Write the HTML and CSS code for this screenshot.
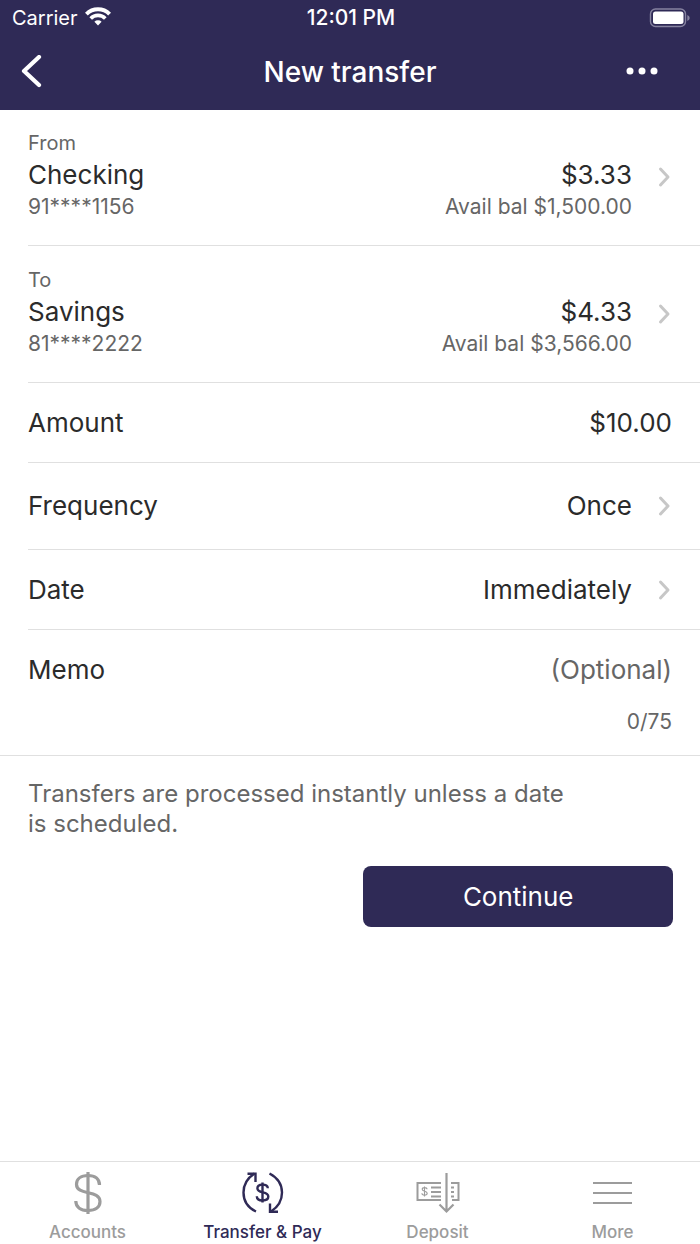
FILE: index.html
```html
<!DOCTYPE html>
<html lang="en">
<head>
<meta charset="utf-8">
<meta name="viewport" content="width=device-width, initial-scale=1">
<title>New transfer</title>
<link rel="stylesheet" href="styles.css">
</head>
<body>
<div class="app">
  <header class="header">
    <div class="status">
      <div class="carrier">
        <span>Carrier</span>
        <svg width="26" height="20" viewBox="0 0 26 20" fill="none" stroke="#fff" stroke-width="4" aria-hidden="true">
          <path d="M1.4 8.1a16.4 16.4 0 0 1 23.2 0"/>
          <path d="M5.7 12.5a10.3 10.3 0 0 1 14.6 0" stroke-width="3.7"/>
          <path d="M13 19.4l-3.6-3.7a5.2 5.2 0 0 1 7.2 0z" fill="#fff" stroke="none"/>
        </svg>
      </div>
      <time class="clock">12:01 PM</time>
      <svg class="battery" width="41" height="20" viewBox="0 0 41 20" aria-hidden="true">
        <rect x="1.500" y="1" width="35" height="17.500" rx="5" fill="none" stroke="#8683a0" stroke-width="1.400"/>
        <rect x="4" y="3.500" width="30.500" height="12.500" rx="2.500" fill="#fff"/>
        <path d="M38.300 7v6q2.400-1 2.400-3t-2.400-3z" fill="#8683a0"/>
      </svg>
    </div>
    <div class="nav">
      <button class="icon-button" type="button" aria-label="Back">
        <svg width="22" height="34" viewBox="0 0 22 34" fill="none" stroke="#fff" stroke-width="4.200" stroke-linecap="round" stroke-linejoin="round"><path d="M19 2L4 16l15 14"/></svg>
      </button>
      <h1 class="title">New transfer</h1>
      <button class="icon-button icon-button-end" type="button" aria-label="More options">
        <svg width="32" height="10" viewBox="0 0 32 10" fill="#fff"><circle cx="4" cy="4" r="3.500"/><circle cx="16" cy="4" r="3.500"/><circle cx="28" cy="4" r="3.500"/></svg>
      </button>
    </div>
  </header>

  <main class="main">
    <form class="form">
      <div class="rows">
        <button class="row account" type="button">
          <span class="stack">
            <span class="caption">From</span>
            <span>Checking</span>
            <span class="detail">91****1156</span>
          </span>
          <span class="stack stack-end">
            <span>$3.33</span>
            <span class="detail">Avail bal $1,500.00</span>
          </span>
          <svg class="chevron" width="14" height="22" viewBox="0 0 14 22"><path d="M2.500 3l7.500 8-7.500 8"/></svg>
        </button>
        <button class="row account account-to" type="button">
          <span class="stack">
            <span class="caption">To</span>
            <span>Savings</span>
            <span class="detail">81****2222</span>
          </span>
          <span class="stack stack-end">
            <span>$4.33</span>
            <span class="detail">Avail bal $3,566.00</span>
          </span>
          <svg class="chevron" width="14" height="22" viewBox="0 0 14 22"><path d="M2.500 3l7.500 8-7.500 8"/></svg>
        </button>
        <div class="row">
          <label for="amount">Amount</label>
          <input class="field" id="amount" type="text" value="$10.00">
        </div>
        <button class="row row-tall" type="button">
          <span>Frequency</span>
          <span class="value">Once</span>
          <svg class="chevron" width="14" height="22" viewBox="0 0 14 22"><path d="M2.500 3l7.500 8-7.500 8"/></svg>
        </button>
        <button class="row" type="button">
          <span>Date</span>
          <span class="value">Immediately</span>
          <svg class="chevron" width="14" height="22" viewBox="0 0 14 22"><path d="M2.500 3l7.500 8-7.500 8"/></svg>
        </button>
      </div>
      <div class="memo">
        <div class="row">
          <label for="memo">Memo</label>
          <input class="field" id="memo" type="text" maxlength="75" placeholder="(Optional)">
        </div>
        <div class="counter">0/75</div>
      </div>
      <div class="footer">
        <p class="note">Transfers are processed instantly unless a date is scheduled.</p>
        <button class="continue" type="submit">Continue</button>
      </div>
    </form>
  </main>

  <nav class="tabs">
    <a class="tab" href="#accounts">
      <svg width="44" height="44" viewBox="0 0 44 44" fill="none" stroke="#9c9c9c" stroke-width="3.200" aria-hidden="true">
        <path d="M22 1v42"/>
        <path d="M33.500 14C33.500 8 29.200 4.500 22 4.500S10.500 8 10.500 13.200c0 12 23.500 5 23.500 17.300 0 5.500-4.300 9-12 9s-12.200-3.800-12.200-9.500"/>
      </svg>
      <span>Accounts</span>
    </a>
    <a class="tab tab-active" href="#transfer" aria-current="page">
      <svg width="44" height="44" viewBox="1 0 44 44" fill="none" stroke="#2f2a56" stroke-width="2.400" aria-hidden="true">
        <path d="M16 40.500C7.500 36.500 3.500 29.500 3.500 21.500c0-8 4-14.500 11-19"/>
        <path d="M7.500 2.800h8v8.200"/>
        <path d="M29.500 2.500C38 7 42 14 42 21.500c0 8-4 14.500-11 19"/>
        <path d="M30 32.500v8.200h8"/>
        <path d="M22.500 11.500v20"/>
        <path d="M27.800 17.300c0-2.300-2-3.700-5.300-3.700s-5.100 1.500-5.100 3.700c0 5.800 10.900 2.300 10.900 8.200 0 2.500-2.100 4-5.800 4s-5.700-1.500-5.700-4.200"/>
      </svg>
      <span>Transfer &amp; Pay</span>
    </a>
    <a class="tab" href="#deposit">
      <svg width="44" height="44" viewBox="1 0 44 44" fill="none" stroke="#9c9c9c" stroke-width="2" aria-hidden="true">
        <path d="M26 12H2.500v17H26M36 12h7.500v17H37"/>
        <path d="M31.500 2v38M24.500 33.500l7 7 7-7" stroke-width="2.200"/>
        <path d="M16 16.500H26M16 21H26M16 25.500H26M36 16.500h3M36 21h3M36 25.500h3"/>
        <path d="M9.500 15.500v10M12 18.200c0-1-1-1.600-2.500-1.600s-2.300.7-2.300 1.700c0 2.600 5 1.300 5 4 0 1.200-1.100 1.900-2.700 1.900s-2.600-.7-2.600-1.900" stroke-width="1.100"/>
      </svg>
      <span>Deposit</span>
    </a>
    <a class="tab" href="#more">
      <svg width="44" height="44" viewBox="1 0 44 44" fill="none" stroke="#9c9c9c" stroke-width="2.200" aria-hidden="true">
        <path d="M3 12h39M3 22h39M3 32h39"/>
      </svg>
      <span>More</span>
    </a>
  </nav>
</div>
</body>
</html>
```

FILE: styles.css
```css
* {
  box-sizing: border-box;
}

body {
  margin: 0;
  background: #fff;
  color: #2b2b2b;
  font-family: Inter, Roboto, sans-serif;
  font-size: 26px;
  line-height: 32px;
}

button,
input {
  margin: 0;
  padding: 0;
  border: 0;
  background: none;
  color: inherit;
  font: inherit;
}

.app {
  display: flex;
  flex-direction: column;
  min-height: 100vh;
}

.header {
  background: #2f2a56;
  color: #fff;
}

.status {
  display: grid;
  grid-template-columns: 1fr auto 1fr;
  align-items: center;
  height: 34px;
  padding: 2px 10px 0 12px;
  font-size: 20px;
  line-height: 24px;
}

.carrier {
  display: flex;
  align-items: center;
  gap: 7px;
}

.carrier svg {
  margin-bottom: 4px;
}

.clock {
  font-size: 21px;
  font-weight: 500;
}

.battery {
  justify-self: end;
}

.nav {
  display: grid;
  grid-template-columns: 1fr auto 1fr;
  align-items: center;
  height: 76px;
  padding: 0 42px 0 20px;
}

.icon-button {
  display: flex;
  justify-self: start;
}

.icon-button-end {
  justify-self: end;
}

.title {
  margin: 0 0 0 22px;
  font-size: 28px;
  font-weight: 500;
}

.main {
  flex: 1;
}

.rows {
  padding-left: 28px;
}

.row {
  display: flex;
  align-items: center;
  width: 100%;
  min-height: 80px;
  padding-right: 28px;
  border-bottom: 1px solid #e0e0e0;
  text-align: left;
}

.row-tall {
  min-height: 87px;
}

.account {
  padding-top: 17px;
  padding-bottom: 22px;
}

.account-to {
  padding-top: 18px;
}

.stack {
  display: flex;
  flex-direction: column;
}

.stack-end {
  align-self: flex-end;
  align-items: flex-end;
  margin-left: auto;
}

.caption,
.detail {
  color: #666;
  font-size: 20px;
}

.detail {
  font-size: 21px;
}

.value {
  margin-left: auto;
}

.chevron {
  flex: none;
  margin-left: 26px;
  fill: none;
  stroke: #c7c7c7;
  stroke-width: 3;
  stroke-linecap: round;
  stroke-linejoin: round;
}

.account .chevron {
  margin-top: 4px;
}

.field {
  flex: 1;
  min-width: 0;
  text-align: right;
}

.field::placeholder {
  color: #666;
  opacity: 1;
}

.memo {
  padding: 0 0 21px 28px;
  border-bottom: 1px solid #e0e0e0;
}

.memo .row {
  border-bottom: 0;
}

.counter {
  padding-right: 28px;
  color: #666;
  font-size: 21px;
  line-height: 24px;
  text-align: right;
}

.footer {
  display: flex;
  flex-direction: column;
  gap: 27px;
  padding: 23px 27px 27px 28px;
}

.note {
  max-width: 560px;
  margin: 0;
  color: #666;
  font-size: 24px;
  line-height: 30px;
}

.continue {
  align-self: flex-end;
  width: 48%;
  height: 61px;
  border-radius: 8px;
  background: #2f2a56;
  color: #fff;
}

.tabs {
  display: grid;
  grid-template-columns: repeat(4, 1fr);
  height: 83px;
  border-top: 1px solid #e0e0e0;
}

.tab {
  display: flex;
  flex-direction: column;
  align-items: center;
  gap: 5px;
  padding-top: 9px;
  color: #9c9c9c;
  font-size: 17px;
  font-weight: 500;
  line-height: 24px;
  text-decoration: none;
}

.tab-active {
  color: #2f2a56;
}
```
